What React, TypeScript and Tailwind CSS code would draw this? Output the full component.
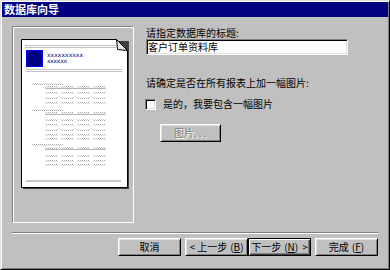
import React from 'react';

const font = "font-['Noto_Sans_CJK_SC','Noto_Sans_CJK_JP',sans-serif]";

// bevel classes for win98 style controls
const raised =
  'border border-t-white border-l-white border-r-black border-b-black shadow-[inset_1px_1px_#dfdfdf,inset_-1px_-1px_#808080]';

const cols = [45, 61, 77, 93];

function Row({ y }: { y: number }) {
  return (
    <>
      {cols.map((x) => (
        <rect key={x} x={x} y={y} width={13} height={2} fill="url(#dots)" />
      ))}
    </>
  );
}

function Section({ y, rows }: { y: number; rows: number[] }) {
  return (
    <>
      <rect x={32} y={y} width={31} height={2} fill="url(#dots)" />
      <Row y={y + 3} />
      <rect x={45} y={y + 5} width={61} height={1} fill="#b8b8b8" />
      {rows.map((r) => (
        <Row key={r} y={y + r} />
      ))}
    </>
  );
}

function PagePreview() {
  return (
    <svg width={120} height={195} viewBox="13 27 120 195" className="block">
      <defs>
        <pattern id="dots" width="2" height="2" patternUnits="userSpaceOnUse">
          <rect width="1" height="1" fill="#a8a8a8" />
          <rect x="1" y="1" width="1" height="1" fill="#d8d8d8" />
        </pattern>
      </defs>
      {/* shadow */}
      <rect x={23} y={41} width={106} height={148} fill="#404040" />
      {/* page */}
      <path d="M21.5 39.5 H116.5 L127.5 50.5 V187.5 H21.5 Z" fill="#fff" stroke="#000" />
      <path d="M116.5 39.5 L117.5 49.5 L127.5 50.5 Z" fill="#e8e8e8" stroke="#000" />
      {/* header */}
      <rect x={25} y={45} width={91} height={1} fill="#c0c0c0" />
      <rect x={25} y={47} width={91} height={1} fill="#c0c0c0" />
      <rect x={26.5} y={50.5} width={16} height={16} fill="#000080" stroke="#0000ff" />
      <text x={47} y={57} fontSize={6} fill="#000080" textLength={36} fontFamily="DejaVu Sans">
        xxxxxxxxxx
      </text>
      <text x={47} y={62.5} fontSize={6} fill="#000080" textLength={20} fontFamily="DejaVu Sans">
        xxxxxx
      </text>
      <rect x={26} y={69} width={96} height={1} fill="#c0c0c0" />
      <rect x={26} y={71} width={96} height={1} fill="#c0c0c0" />
      {/* report body */}
      <Section y={83} rows={[9, 14, 19]} />
      <Section y={109} rows={[10, 15, 20, 25, 29]} />
      <Section y={144} rows={[11, 16, 20]} />
      <rect x={26} y={180} width={95} height={2} fill="#c8c8c8" />
    </svg>
  );
}

function WinButton({ children, def = false, className = '' }: { children: React.ReactNode; def?: boolean; className?: string }) {
  return (
    <button
      type="button"
      className={`h-[18px] w-[63px] bg-[#c0c0c0] text-[10px] leading-[12px] text-black flex items-center justify-center ${
        def
          ? 'border border-black shadow-[inset_1px_1px_#fff,inset_-1px_-1px_#404040,inset_-2px_-2px_#808080]'
          : raised
      } ${className}`}
    >
      {children}
    </button>
  );
}

export default function App() {
  return (
    <div
      className={`w-[390px] h-[270px] bg-[#c0c0c0] border border-t-[#dfdfdf] border-l-[#dfdfdf] border-r-black border-b-black shadow-[inset_1px_1px_#fff,inset_-1px_-1px_#808080] p-[1px] flex flex-col ${font}`}
    >
      {/* title bar */}
      <div className="h-[15px] bg-[#000080] flex items-center pl-[2px]">
        <span className="text-white text-[11px] leading-[13px] font-bold">数据库向导</span>
      </div>

      {/* main area */}
      <div className="flex mt-[9px] pl-[10px]">
        <div className="w-[122px] h-[197px] border border-t-[#808080] border-l-[#808080] border-r-white border-b-white shadow-[inset_1px_1px_#fff]">
          <PagePreview />
        </div>

        <div className="flex flex-col ml-[12px] pt-[1px] text-[10px] leading-[12px] text-black">
          <span>请指定数据库的标题:</span>
          <div className="w-[202px] h-[16px] bg-white border border-t-[#808080] border-l-[#808080] border-r-white border-b-white shadow-[inset_1px_1px_#000,inset_-1px_-1px_#dfdfdf] pl-[1px] flex items-center">
            客户订单资料库
          </div>

          <span className="mt-[22px]">请确定是否在所有报表上加一幅图片:</span>

          <div className="flex items-center mt-[9px] -ml-[1px]">
            <div className="w-[11px] h-[11px] bg-white border border-t-[#808080] border-l-[#808080] border-r-white border-b-white shadow-[inset_1px_1px_#000,inset_-1px_-1px_#dfdfdf]" />
            <span className="ml-[7px]">是的，我要包含一幅图片</span>
          </div>

          <button
            type="button"
            className={`mt-[14px] ml-[14px] w-[61px] h-[18px] bg-[#c0c0c0] ${raised} text-[10px] leading-[12px] text-[#808080] [text-shadow:1px_1px_0_#fff] flex items-center justify-center`}
          >
            图片. . .
          </button>
        </div>
      </div>

      {/* separator */}
      <div className="mt-[9px] ml-[10px] w-[366px] h-[2px] border-t border-t-[#808080] border-b border-b-white" />

      {/* buttons */}
      <div className="flex mt-[4px] ml-[116px]">
        <WinButton>取消</WinButton>
        <WinButton className="ml-[4px]">
          &lt; 上一步<span className="ml-[3px]">(<u>B</u>)</span>
        </WinButton>
        <WinButton def>
          下一步<span className="ml-[3px]">(<u>N</u>)</span>
          <span className="ml-[4px]">&gt;</span>
        </WinButton>
        <WinButton className="ml-[4px]">
          完成<span className="ml-[3px]">(<u>F</u>)</span>
        </WinButton>
      </div>
    </div>
  );
}
